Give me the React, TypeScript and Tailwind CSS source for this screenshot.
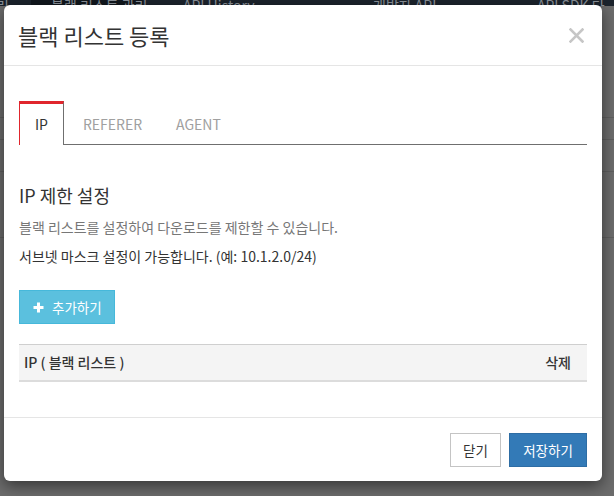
import React from "react";

const font = { fontFamily: '"Noto Sans CJK KR", "Noto Sans", sans-serif' };

export default function App() {
  return (
    <div
      className="relative w-[614px] h-[496px] overflow-hidden bg-[#6c6c6c]"
      style={font}
    >
      {/* dimmed background page */}
      <div className="h-[6px] bg-[#1b232c] overflow-hidden">
        <div className="flex items-end h-[6px] text-[14px] leading-none text-[#8b929a] whitespace-nowrap">
          <div className="flex items-end h-[6px] -mb-[6px]">
            <span className="w-[35px] -ml-[4px]">리</span>
            <span className="w-[112px] pl-[20px] bg-[#11171d] h-[20px] flex items-end">블랙 리스트 관리</span>
            <span className="ml-[40px] w-[190px]">API History</span>
            <span className="w-[164px]">개발자 API</span>
            <span>API SDK 다</span>
          </div>
        </div>
      </div>
      <div className="flex flex-col">
        <div className="h-[112px] border-b border-[#5f5f5f]" />
        <div className="h-[22px] border-b border-[#5f5f5f]" />
        <div className="h-[32px] border-b border-[#5f5f5f]" />
        <div className="h-[66px] border-b border-[#5f5f5f]" />
      </div>

      {/* modal */}
      <div className="absolute left-[4px] top-[5px] w-[598px] h-[476px] bg-white rounded-[6px] shadow-[0_5px_15px_rgba(0,0,0,0.5)] flex flex-col">
        {/* header */}
        <div className="h-[61px] border-b border-[#e5e5e5] flex items-center justify-between pl-[14px] pr-[18px]">
          <div className="text-[22px] text-[#333] leading-none -mt-[1px]">블랙 리스트 등록</div>
          <svg width="15" height="15" viewBox="0 0 15 15" className="mt-[1px]">
            <path d="M1.5 1.5 L13.5 13.5 M13.5 1.5 L1.5 13.5" stroke="#c6c6c6" strokeWidth="2.6" strokeLinecap="square" />
          </svg>
        </div>

        {/* body */}
        <div className="flex-1 pt-[35px] px-[15px]">
          {/* tabs */}
          <div className="flex gap-1 border-b border-[#6f6f6f] h-[44px]">
            <div className="h-[44px] -mb-px px-[15px] bg-white border-t-[3px] border-t-[#e0262d] border-l border-l-[#e0262d] border-r border-r-[#6f6f6f] flex items-center text-[14px] text-[#333]">
              IP
            </div>
            <div className="h-[43px] px-[15px] flex items-center text-[14px] text-[#a0a0a0] pt-[3px]">REFERER</div>
            <div className="h-[43px] px-[15px] flex items-center text-[14px] text-[#a0a0a0] pt-[3px]">AGENT</div>
          </div>

          <div className="mt-[40px] text-[18px] leading-[20px] text-[#333]">IP 제한 설정</div>
          <div className="mt-[12px] text-[14px] leading-[20px] text-[#777]">
            블랙 리스트를 설정하여 다운로드를 제한할 수 있습니다.
          </div>
          <div className="mt-[9px] text-[14px] leading-[20px] text-[#333]">
            서브넷 마스크 설정이 가능합니다. (예: 10.1.2.0/24)
          </div>

          <div className="mt-[24px] flex">
            <div className="h-[34px] w-[96px] pl-[13px] bg-[#5bc0de] border border-[#46b8da] flex items-center gap-[8px] text-white text-[13.5px]">
              <svg width="11" height="11" viewBox="0 0 11 11">
                <path d="M5.5 0.5 V10.5 M0.5 5.5 H10.5" stroke="white" strokeWidth="3" />
              </svg>
              <span>추가하기</span>
            </div>
          </div>

          <div className="mt-[20px] h-[38px] bg-[#f4f4f4] border-t border-[#cfcfcf] border-b-2 border-b-[#dcdcdc] flex items-center justify-between pl-[5px] pr-[16px] text-[14px] text-[#333] font-medium">
            <span>IP ( 블랙 리스트 )</span>
            <span>삭제</span>
          </div>
        </div>

        {/* footer */}
        <div className="h-[64px] border-t border-[#e5e5e5] flex items-start justify-end gap-[8px] pt-[15px] pr-[15px]">
          <div className="h-[34px] w-[51px] border border-[#c4c4c4] bg-white flex items-center justify-center text-[13.5px] text-[#333]">
            닫기
          </div>
          <div className="h-[34px] w-[78px] border border-[#2e6da4] bg-[#337ab7] flex items-center justify-center text-[13.5px] text-white">
            저장하기
          </div>
        </div>
      </div>
    </div>
  );
}
